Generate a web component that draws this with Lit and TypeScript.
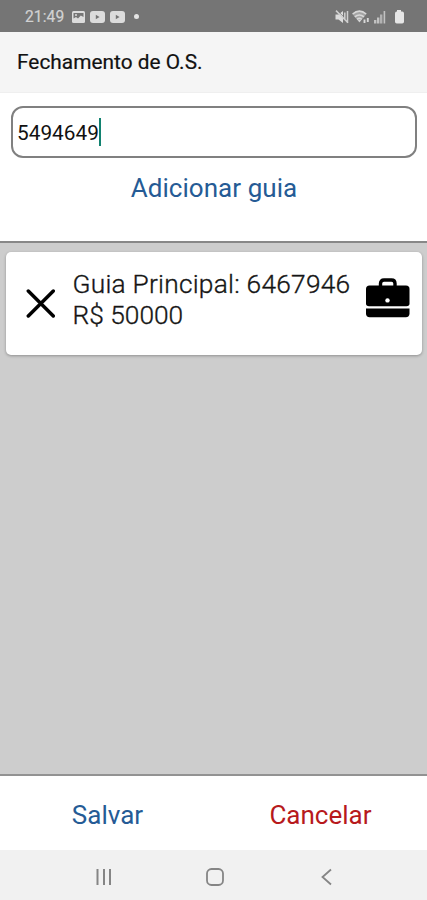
import { LitElement, html, css } from "lit";
import { customElement, property } from "lit/decorators.js";

@customElement("status-bar")
class StatusBar extends LitElement {
  static styles = css`
    :host { display: flex; align-items: center; justify-content: space-between; height: 32px; box-sizing: border-box;
      background: #757575; color: #d2d2d2; padding: 1px 22px 0 25px; flex: none; }
    .group { display: flex; align-items: center; }
    .time { font-size: 15.6px; letter-spacing: 0.1px; margin-right: 8px; line-height: 20px; width: 39px; -webkit-text-stroke: .2px #d2d2d2; }
    svg { display: block; flex: none; }
    .photo { margin-right: 5px; }
    .video { margin-right: 5px; }
    .dot { width: 5px; height: 5px; border-radius: 50%; background: #e4e4e4; margin-left: 4px; }
    .mute { margin-right: 3px; }
    .wifi { margin-right: 4px; }
    .signal { margin-right: 8px; }
  `;
  private video() {
    return html`<svg class="video" width="15" height="12" viewBox="0 0 15 12">
      <rect width="15" height="12" rx="3" fill="#dcdcdc" /><path d="M5.800 3.700v4.600l3.800-2.300z" fill="#757575" /></svg>`;
  }
  render() {
    return html`
      <div class="group">
        <span class="time">21:49</span>
        <svg class="photo" width="13" height="12" viewBox="0 0 13 12"><rect width="13" height="12" rx="1.5" fill="#dcdcdc" />
          <path d="M1.5 7.5V2h10v4L8.8 4.5 6 7.6 4 6z" fill="#757575" /><circle cx="4" cy="4" r="1" fill="#dcdcdc" /></svg>
        ${this.video()}${this.video()}
        <span class="dot"></span>
      </div>
      <div class="group">
        <svg class="mute" width="14" height="14" viewBox="0 0 14 14"><path d="M.5 4.500h3L8 1v12L3.500 9.500h-3z" fill="#dcdcdc" />
          <path d="M2 0l12 12" stroke="#757575" stroke-width=".7" /><path d="M1 .6l12 12.200M9.800 2.500v7M12.500 1v12" stroke="#cfcfcf" stroke-width="1.500" fill="none" /></svg>
        <svg class="wifi" width="18" height="14" viewBox="0 0 18 14"><path d="M.4 4q7-6.400 14 0L7.400 12.500z" fill="#a4a4a4" /><g fill="none" stroke="#d8d8d8" stroke-width="1.600">
          <path d="M.6 4q6.800-5.600 13.600 0M2.800 6.800q4.600-3.600 9.200 0M5 9.300q2.400-1.800 4.800 0" /></g><path d="M5.700 10h3.500l-1.750 2.300z" fill="#d8d8d8" />
          <path d="M12.500 9.500v3.500M15.800 8v4" stroke="#d8d8d8" stroke-width="1.900" /></svg>
        <svg class="signal" width="12" height="14" viewBox="0 0 12 14"><g fill="#c2c2c2"><rect x="0" y="10" width="2.400" height="3.500" />
          <rect x="3" y="7.500" width="2.400" height="6" /><rect x="6" y="4.500" width="2.400" height="9" opacity=".8" /><rect x="9.600" y="1" width="1.600" height="12.500" /></g></svg>
        <svg width="11" height="14" viewBox="0 0 11 14"><path d="M3 0h4v1.600h1.200q1.800 0 1.800 1.800v8.400q0 1.800-1.800 1.800H2.800Q1 13.600 1 11.800V3.400Q1 1.600 2.800 1.600H3z" fill="#e6e6e6" /></svg>
      </div>`;
  }
}

@customElement("guide-card")
class GuideCard extends LitElement {
  @property() number = "";
  @property() amount = "";
  static styles = css`
    :host { display: flex; box-sizing: border-box; height: 103px; margin: 9px 5px 0 6px; border-radius: 5px; background: #fff;
      box-shadow: 0 1px 3px rgba(0,0,0,.3); padding: 17px 12px 0 19px; }
    svg { display: block; flex: none; }
    .close { margin-top: 19px; }
    .text { flex: 1; margin-left: 17.500px; font-size: 26.3px; line-height: 31px; letter-spacing: .24px; font-weight: 300; color: #111; white-space: nowrap; -webkit-text-stroke: .35px #222; }
    .amount { letter-spacing: 0; }
    .case { margin-top: 8px; }
  `;
  render() {
    return html`
      <svg class="close" width="30" height="31" viewBox="0 0 30 31"><path d="M3.300 3l25 25M28.300 3L3.300 28" stroke="#000" stroke-width="3.500" stroke-linecap="round" /></svg>
      <div class="text"><div>Guia Principal: ${this.number}</div><div class="amount">R$ ${this.amount}</div></div>
      <svg class="case" width="45" height="41" viewBox="0 0 45 41">
        <path d="M15.500 9V6.500Q15.500 3 19 3H26.500Q30 3 30 6.500V9" fill="none" stroke="#000" stroke-width="3.400" />
        <path d="M4.500 8.500H41Q44.500 8.500 44.500 12V26.500Q44.500 29.300 41.500 29.300H4Q1 29.300 1 26.500V12Q1 8.500 4.500 8.500z" />
        <path d="M1 31.600H44.500V36.500Q44.500 40.200 40.800 40.200H4.700Q1 40.200 1 36.500z" /><circle cx="22.500" cy="23.400" r="2.200" fill="#fff" />
      </svg>`;
  }
}

@customElement("nav-bar")
class NavBar extends LitElement {
  static styles = css`
    :host { display: flex; height: 50px; flex: none; background: #f1f1f1; align-items: center; padding: 3px 94px 0 95px; box-sizing: border-box; justify-content: space-between; }
    svg { display: block; fill: none; stroke: #858585; }
    .home { margin-right: 4px; }
  `;
  render() {
    return html`
      <svg width="18" height="18" viewBox="0 0 18 18" stroke-width="2"><path d="M2.500 1v16M9 1v16M15 1v16" /></svg>
      <svg class="home" width="20" height="18" viewBox="0 0 20 18" stroke-width="1.800"><rect x="2" y="1" width="16" height="16" rx="4.500" /></svg>
      <svg width="12" height="18" viewBox="0 0 12 18" stroke-width="1.800"><path d="M10 1.500L1.500 9l8.500 7.500" /></svg>`;
  }
}

@customElement("app-root")
class AppRoot extends LitElement {
  static styles = css`
    :host { display: flex; flex-direction: column; height: 900px; font-family: Roboto, sans-serif; background: #fff; overflow: hidden; }
    .header { height: 61px; flex: none; box-sizing: border-box; background: #f5f5f5; border-bottom: 1px solid #efefef;
      padding: 0 17px; line-height: 61px; font-size: 20.800px; color: #111; font-weight: 400; letter-spacing: .04px; -webkit-text-stroke: .2px #111; }
    .form { height: 148px; flex: none; box-sizing: border-box; padding: 13px 10px 0 11px; }
    .field { height: 52px; box-sizing: border-box; border: 2px solid #808080; border-radius: 12px; padding-left: 4px;
      display: flex; align-items: center; font-size: 20.800px; color: #111; }
    .field span:first-child { padding-top: 1px; }
    .caret { width: 2px; height: 28px; background: #128270; }
    .add { text-align: center; margin-top: 14px; line-height: 32px; font-size: 26px; color: #255b95; letter-spacing: .05px; }
    .list { flex: 1; background: #cdcdcd; border-top: 2px solid #888; border-bottom: 2px solid #929292; }
    .actions { height: 74px; flex: none; display: grid; grid-template-columns: 1fr 1fr; text-align: center; line-height: 78px; font-size: 26px; padding-left: 1px; }
    .save { color: #255b95; }
    .cancel { color: #b7191c; }
  `;
  render() {
    return html`
      <status-bar></status-bar>
      <div class="header">Fechamento de O.S.</div>
      <div class="form">
        <div class="field"><span>5494649</span><span class="caret"></span></div>
        <div class="add">Adicionar guia</div>
      </div>
      <div class="list"><guide-card number="6467946" amount="50000"></guide-card></div>
      <div class="actions"><span class="save">Salvar</span><span class="cancel">Cancelar</span></div>
      <nav-bar></nav-bar>`;
  }
}
